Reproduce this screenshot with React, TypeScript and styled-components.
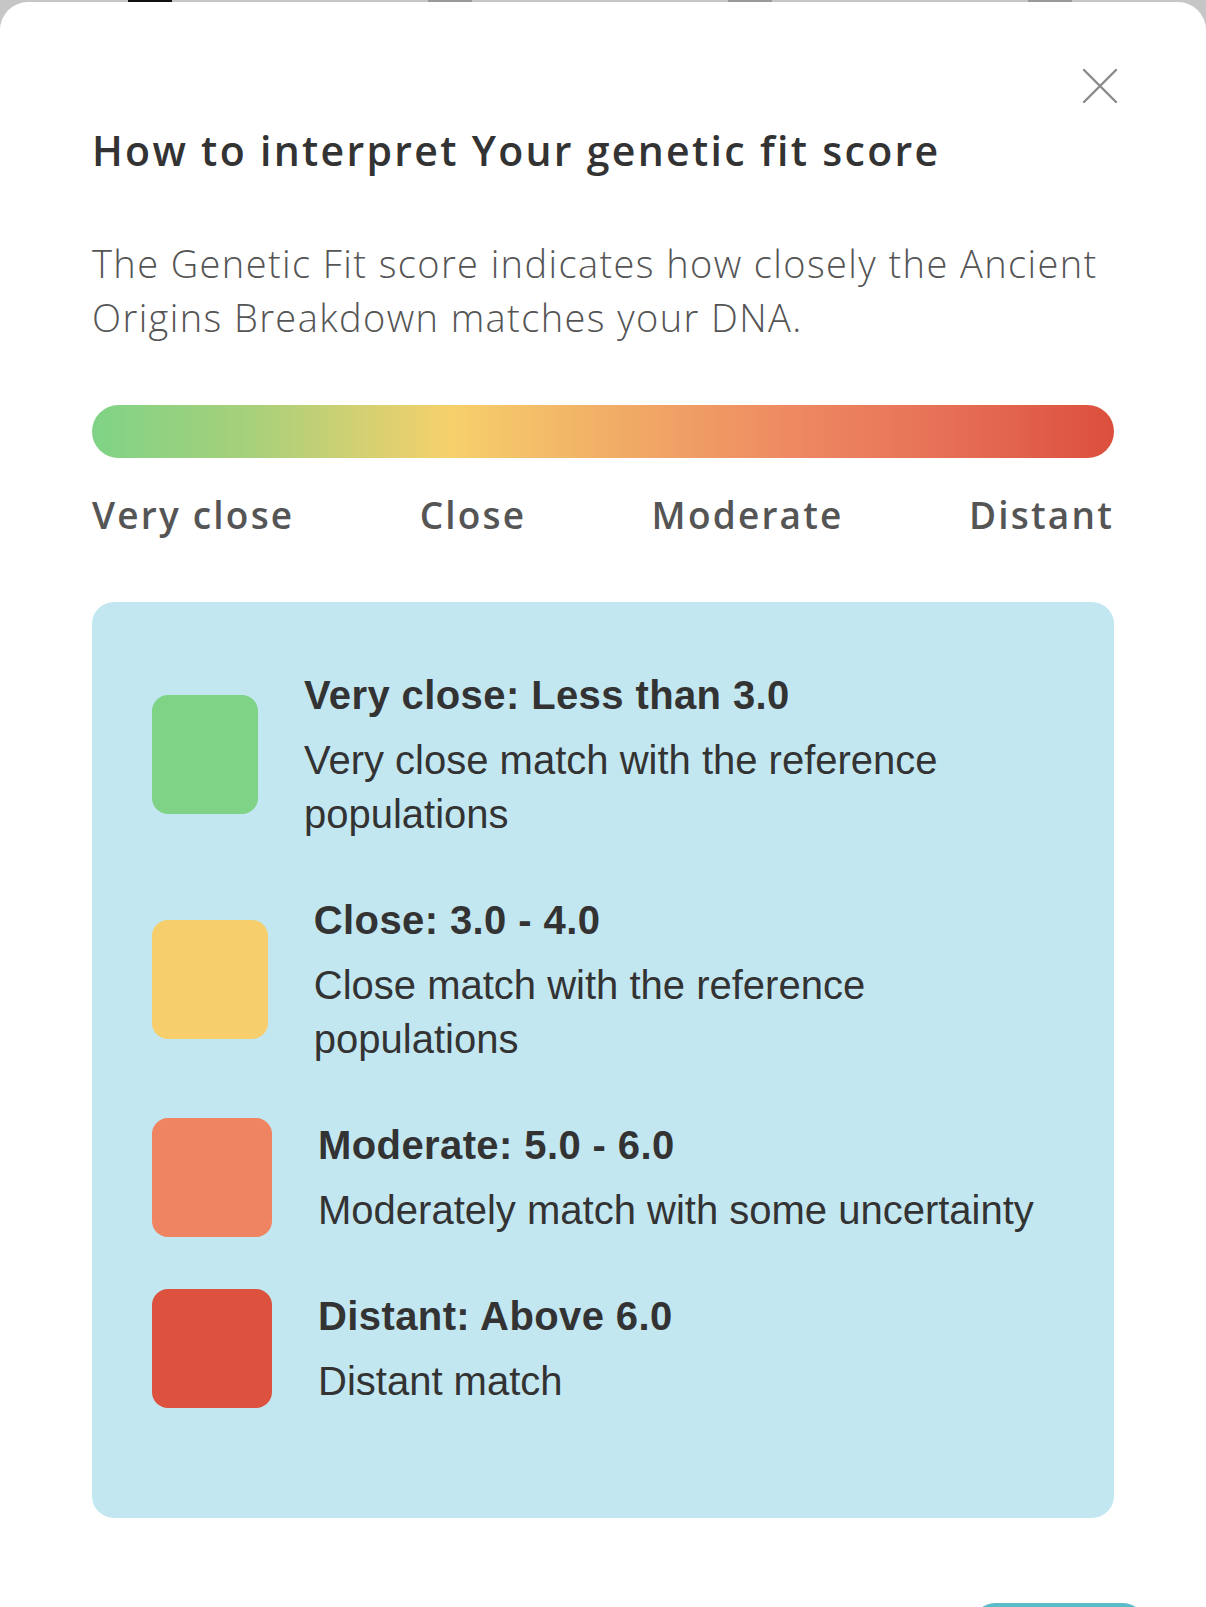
import { FC } from "react";
import styled, { createGlobalStyle } from "styled-components";

const GlobalStyle = createGlobalStyle`
   html,
   body {
      margin: 0;
      padding: 0;
      background-color: #c6c6c6;
      height: 100%;
      overflow: hidden;
   }
`;

const Screen = styled.div`
   width: 1206px;
   height: 1607px;
   display: flex;
   flex-direction: column;
   overflow: hidden;
`;

// the tab bar peeking out from behind the sheet
const BackdropBar = styled.div`
   height: 2px;
   display: flex;
   gap: 256px;
   padding-left: 128px;
`;

const BackdropTab = styled.span<{ $active?: boolean }>`
   width: 44px;
   height: 2px;
   background-color: ${(p) => (p.$active ? "#111" : "#999")};
`;

const Sheet = styled.div`
   flex: 1;
   background-color: white;
   border-radius: 28px 28px 0 0;
   padding: 0 92px;
   display: flex;
   flex-direction: column;
`;

const SheetHeader = styled.div`
   display: flex;
   justify-content: flex-end;
   margin-top: 66px;
   margin-right: -4px;
`;

const CloseButton = styled.button`
   all: unset;
   width: 36px;
   height: 36px;
   cursor: pointer;
   display: flex;
   align-items: center;
   justify-content: center;
`;

const Title = styled.h2`
   margin: 20px 0 0;
   font-family: "Open Sans", sans-serif;
   font-weight: 600;
   font-size: 41px;
   line-height: 52px;
   color: #333;
   letter-spacing: 2.3px;
`;

const Description = styled.p`
   margin: 60px 0 0;
   font-family: "Open Sans", sans-serif;
   font-weight: 300;
   font-size: 38px;
   line-height: 54px;
   color: #555;
   letter-spacing: 1.4px;
`;

const ScaleBar = styled.div`
   margin-top: 61px;
   height: 53px;
   border-radius: 27px;
   background: linear-gradient(
      90deg,
      #7fd386 0%,
      #a9d07a 16%,
      #f6d06b 35%,
      #f1ab66 52%,
      #ee8a62 68%,
      #e66f56 84%,
      #dc4f3d 100%
   );
`;

const ScaleLabels = styled.div`
   margin-top: 35px;
   display: flex;
   justify-content: space-between;
`;

const ScaleLabel = styled.span`
   font-family: "Open Sans", sans-serif;
   font-weight: 600;
   font-size: 37px;
   line-height: 44px;
   color: #555;
   letter-spacing: 2.2px;
`;

const LegendBox = styled.div`
   margin-top: 65px;
   background-color: #c3e7f1;
   border-radius: 22px;
   padding: 66px 60px 110px;
   display: flex;
   flex-direction: column;
   gap: 52px;
`;

const LegendRow = styled.div`
   display: flex;
   align-items: center;
   gap: 46px;
`;

const Swatch = styled.div<{ $color: string }>`
   width: 120px;
   height: 119px;
   border-radius: 16px;
   background-color: ${(p) => p.$color};
`;

const LegendText = styled.div`
   display: flex;
   flex-direction: column;
   gap: 11px;
   font-family: "Liberation Sans", Arial, sans-serif;
   font-size: 40px;
   line-height: 54px;
   color: #333;
`;

const LegendTitle = styled.span`
   font-weight: 700;
   letter-spacing: 0.4px;
`;

const LegendDesc = styled.span`
   font-weight: 400;
`;

const Footer = styled.div`
   margin-top: 85px;
   display: flex;
   justify-content: flex-end;
   margin-right: -31px;
`;

const PrimaryButton = styled.button`
   all: unset;
   width: 172px;
   height: 64px;
   border-radius: 22px;
   background-color: #5bbcc8;
`;

const CloseIcon: FC = () => (
   <svg width="36" height="36" viewBox="0 0 36 36">
      <path
         d="M2 2 L34 34 M34 2 L2 34"
         stroke="#8a8a8a"
         strokeWidth="2.4"
         strokeLinecap="round"
      />
   </svg>
);

const levels = [
   {
      color: "#7fd386",
      title: "Very close: Less than 3.0",
      desc: "Very close match with the reference populations",
   },
   {
      color: "#f6ce6b",
      title: "Close: 3.0 - 4.0",
      desc: "Close match with the reference populations",
   },
   {
      color: "#ee8461",
      title: "Moderate: 5.0 - 6.0",
      desc: "Moderately match with some uncertainty",
   },
   {
      color: "#dc523f",
      title: "Distant: Above 6.0",
      desc: "Distant match",
   },
];

const App: FC = () => {
   return (
      <>
         <GlobalStyle />
         <Screen>
            <BackdropBar>
               <BackdropTab $active />
               <BackdropTab />
               <BackdropTab />
               <BackdropTab />
            </BackdropBar>
            <Sheet>
               <SheetHeader>
                  <CloseButton aria-label="Close">
                     <CloseIcon />
                  </CloseButton>
               </SheetHeader>
               <Title>How to interpret Your genetic fit score</Title>
               <Description>
                  The Genetic Fit score indicates how closely the Ancient Origins
                  Breakdown matches your DNA.
               </Description>
               <ScaleBar />
               <ScaleLabels>
                  <ScaleLabel>Very close</ScaleLabel>
                  <ScaleLabel>Close</ScaleLabel>
                  <ScaleLabel>Moderate</ScaleLabel>
                  <ScaleLabel>Distant</ScaleLabel>
               </ScaleLabels>
               <LegendBox>
                  {levels.map((l) => (
                     <LegendRow key={l.title}>
                        <Swatch $color={l.color} />
                        <LegendText>
                           <LegendTitle>{l.title}</LegendTitle>
                           <LegendDesc>{l.desc}</LegendDesc>
                        </LegendText>
                     </LegendRow>
                  ))}
               </LegendBox>
               <Footer>
                  <PrimaryButton />
               </Footer>
            </Sheet>
         </Screen>
      </>
   );
};

export default App;
